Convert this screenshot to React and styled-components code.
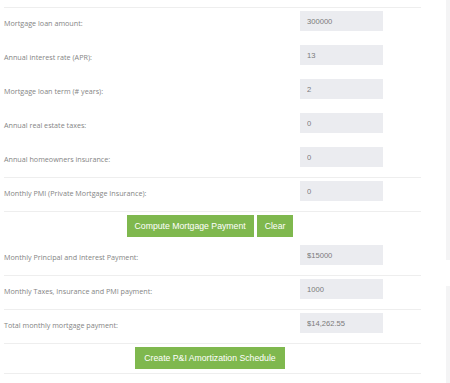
import React from "react";
import styled, { createGlobalStyle } from "styled-components";

const GlobalStyle = createGlobalStyle`
  html, body { margin: 0; padding: 0; background: #ffffff; }
  * { box-sizing: border-box; }
`;

const Page = styled.div`
  display: flex;
  width: 450px;
  height: 383px;
  overflow: hidden;
`;

const Main = styled.div`
  margin: 7px 0 0 4px;
  width: 417px;
  border-top: 1px solid #eeeeee;
  align-self: flex-start;
`;

const Row = styled.div`
  display: grid;
  grid-template-columns: 296px 83px;
  align-items: center;
  padding: 3px 0 10px;
  border-bottom: 1px solid ${(p) => (p.$line ? "#eeeeee" : "transparent")};
`;

const Label = styled.label`
  font-family: "Open Sans", sans-serif;
  font-size: 7.2px;
  color: #858585;
  padding-top: 3px;
  white-space: nowrap;
`;

const Field = styled.input`
  width: 83px;
  height: 20px;
  border: none;
  outline: none;
  background: #ebecf0;
  padding: 0 7px;
  font-family: "Liberation Sans", Arial, sans-serif;
  font-size: 7.6px;
  color: #7a7a7a;
`;

const ButtonRow = styled.div`
  display: flex;
  justify-content: center;
  gap: 3px;
  padding: 3px 5px 4px 0;
  border-bottom: 1px solid ${(p) => (p.$line ? "#eeeeee" : "transparent")};
`;

const Button = styled.button`
  height: 22px;
  border: none;
  background: #7fb84e;
  color: #ffffff;
  font-family: "Liberation Sans", Arial, sans-serif;
  font-size: 8.7px;
  padding: 0 ${(p) => (p.$wide ? 9 : 8)}px;
  cursor: pointer;
`;

const Side = styled.div`
  margin-left: auto;
  width: 4px;
  display: flex;
  flex-direction: column;
  gap: 26px;
`;

const SideBlock = styled.div`
  background: #f4f4f5;
  height: ${(p) => p.$h || "auto"};
  flex: ${(p) => (p.$grow ? 1 : "none")};
`;

const inputs = [
  { label: "Mortgage loan amount:", value: "300000" },
  { label: "Annual interest rate (APR):", value: "13" },
  { label: "Mortgage loan term (# years):", value: "2" },
  { label: "Annual real estate taxes:", value: "0" },
  { label: "Annual homeowners insurance:", value: "0", line: true },
  { label: "Monthly PMI (Private Mortgage Insurance):", value: "0", line: true },
];

const results = [
  { label: "Monthly Principal and Interest Payment:", value: "$15000" },
  { label: "Monthly Taxes, Insurance and PMI payment:", value: "1000" },
  { label: "Total monthly mortgage payment:", value: "$14,262.55" },
];

export default function App() {
  return (
    <>
      <GlobalStyle />
      <Page>
        <Main>
          {inputs.map((r) => (
            <Row key={r.label} $line={r.line}>
              <Label>{r.label}</Label>
              <Field readOnly value={r.value} />
            </Row>
          ))}
          <ButtonRow>
            <Button>Compute Mortgage Payment</Button>
            <Button>Clear</Button>
          </ButtonRow>
          {results.map((r) => (
            <Row key={r.label} $line>
              <Label>{r.label}</Label>
              <Field readOnly value={r.value} />
            </Row>
          ))}
          <ButtonRow $line>
            <Button $wide>Create P&amp;I Amortization Schedule</Button>
          </ButtonRow>
        </Main>
        <Side>
          <SideBlock $h="260px" />
          <SideBlock $grow />
        </Side>
      </Page>
    </>
  );
}
